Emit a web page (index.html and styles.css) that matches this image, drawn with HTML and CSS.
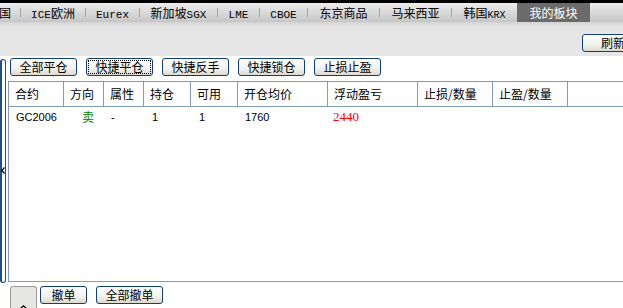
FILE: index.html
```html
<!DOCTYPE html>
<html lang="zh">
<head>
  <meta charset="UTF-8" />
  <title>我的板块</title>
  <link rel="stylesheet" href="styles.css">
</head>
<body>
  <div class="topline"></div>
  <div class="tabbar">
    <div class="tab first">国</div><span class="sep"></span>
    <div class="tab"><span class="en">ICE</span>欧洲</div><span class="sep"></span>
    <div class="tab"><span class="en">Eurex</span></div><span class="sep"></span>
    <div class="tab">新加坡<span class="en">SGX</span></div><span class="sep"></span>
    <div class="tab"><span class="en">LME</span></div><span class="sep"></span>
    <div class="tab"><span class="en">CBOE</span></div><span class="sep"></span>
    <div class="tab">东京商品</div><span class="sep"></span>
    <div class="tab">马来西亚</div><span class="sep"></span>
    <div class="tab">韩国<span class="en small">KRX</span></div>
    <div class="tab active">我的板块</div>
    <div></div>
  </div>

  <div class="toolbar">
    <button class="btn refresh">刷新</button>
  </div>

  <div class="main">
    <div class="side-bar">
      <svg class="arrow" width="4" height="7" viewBox="0 0 4 7"><path d="M3.5 0.5 L0.8 3.5 L3.5 6.5" fill="none" stroke="#000" stroke-width="1.3"/></svg>
    </div>
    <div class="content">
      <div class="btn-row">
        <button class="btn">全部平仓</button>
        <button class="btn focused">快捷平仓</button>
        <button class="btn">快捷反手</button>
        <button class="btn">快捷锁仓</button>
        <button class="btn">止损止盈</button>
      </div>
      <div class="grid">
        <div class="grid-head">
          <div>合约</div><div>方向</div><div>属性</div><div>持仓</div><div>可用</div>
          <div>开仓均价</div><div>浮动盈亏</div><div>止损/数量</div><div>止盈/数量</div><div></div>
        </div>
        <div class="grid-row">
          <div class="num">GC2006</div>
          <div class="sell">卖</div>
          <div class="num">-</div>
          <div class="num one">1</div>
          <div class="num one">1</div>
          <div class="num">1760</div>
          <div class="profit">2440</div>
          <div></div><div></div><div></div>
        </div>
      </div>
    </div>
  </div>

  <div class="bottom">
    <div class="mini-tab">
      <svg width="7" height="4" viewBox="0 0 7 4"><path d="M0.5 3.5 L3.5 0.8 L6.5 3.5" fill="none" stroke="#000" stroke-width="1.2"/></svg>
    </div>
    <button class="btn small-btn">撤单</button>
    <button class="btn">全部撤单</button>
  </div>
</body>
</html>
```

FILE: styles.css
```css
html, body {
  overflow: hidden;
}
body {
  margin: 0;
  width: 623px;
  height: 308px;
  background: #ffffff;
  font-family: "Noto Sans CJK SC", sans-serif;
  font-size: 12px;
  color: #000;
}
.topline {
  height: 3px;
  background: #000;
}
.tabbar {
  height: 19px;
  display: grid;
  grid-template-columns: 20px 1px 64px 1px 53px 1px 77px 1px 41px 1px 47px 1px 71px 1px 71px 1px 65px 73px 1fr;
  background: linear-gradient(#ececec, #c6c6c6);
  line-height: 19px;
}
.tab {
  text-align: center;
  white-space: nowrap;
  overflow: hidden;
}
.tab.first {
  text-align: right;
  padding-right: 9px;
  direction: rtl;
}
.tab.active {
  background: #6b6b6b;
  color: #fff;
}
.sep {
  align-self: center;
  height: 9px;
  background: #a3a3a3;
}
.en {
  font-family: "Liberation Mono", monospace;
  font-size: 11px;
}
.en.small {
  font-size: 10px;
}
.toolbar {
  height: 34px;
  background: linear-gradient(#d3d3d3 0, #e6e6e6 5px, #e6e6e6);
  position: relative;
}
.btn {
  height: 18px;
  width: 67px;
  padding: 0;
  border: 1px solid #0f3f74;
  border-radius: 3px;
  background: linear-gradient(#ffffff, #f2f1ec 60%, #dcd9cf);
  font-family: "Noto Sans CJK SC", sans-serif;
  font-size: 12px;
  line-height: 16px;
  color: #000;
}
.btn.focused {
  outline: 1px dotted #000;
  outline-offset: -3px;
}
.refresh {
  position: absolute;
  left: 582px;
  top: 12px;
  width: 62px;
}
.main {
  height: 230px;
  display: flex;
}
.side-bar {
  box-sizing: border-box;
  width: 6px;
  height: 224px;
  margin-top: 3px;
  border: 1px solid #1f4f86;
  border-left-width: 2px;
  border-radius: 3px;
  background: #fff;
  display: flex;
  align-items: center;
}
.arrow {
  margin-left: -1px;
  margin-top: -2px;
}
.content {
  flex: 1;
  margin-left: 2px;
}
.btn-row {
  display: flex;
  gap: 9px;
  padding: 2px 0 0 2px;
}
.grid {
  box-sizing: border-box;
  height: 201px;
  margin-top: 5px;
  border-top: 1px solid #7f9db9;
  border-left: 1px solid #7f9db9;
  border-bottom: 1px solid #7f9db9;
}
.grid-head, .grid-row {
  display: grid;
  grid-template-columns: 55px 40px 40px 47px 47px 90px 90px 75px 75px 1fr;
}
.grid-head {
  height: 24px;
  border-bottom: 1px solid #7f9db9;
}
.grid-head div {
  border-right: 1px solid #7f9db9;
  padding-left: 6px;
  line-height: 23px;
}
.grid-head div:last-child {
  border-right: none;
}
.grid-row {
  height: 20px;
  line-height: 20px;
}
.grid-row div {
  padding-left: 7px;
}
.num {
  font-family: "Liberation Sans", sans-serif;
  font-size: 11px;
}
.grid-row .one {
  padding-left: 8px;
}
.grid-row .sell {
  padding-left: 18px;
  color: #008000;
}
.profit {
  font-family: "Liberation Serif", serif;
  font-size: 13px;
  color: #ff0000;
}
.grid-row .profit {
  padding-left: 5px;
}
.bottom {
  display: flex;
  align-items: flex-start;
  padding-left: 10px;
}
.mini-tab {
  box-sizing: border-box;
  width: 27px;
  height: 24px;
  margin-right: 3px;
  border: 1px solid #9a9a9a;
  border-bottom: none;
  border-radius: 3px 3px 0 0;
  background: #e6e6e2;
  display: flex;
  justify-content: center;
  align-items: flex-end;
  padding-bottom: 1px;
}
.small-btn {
  width: 47px;
  margin-right: 9px;
}
```
